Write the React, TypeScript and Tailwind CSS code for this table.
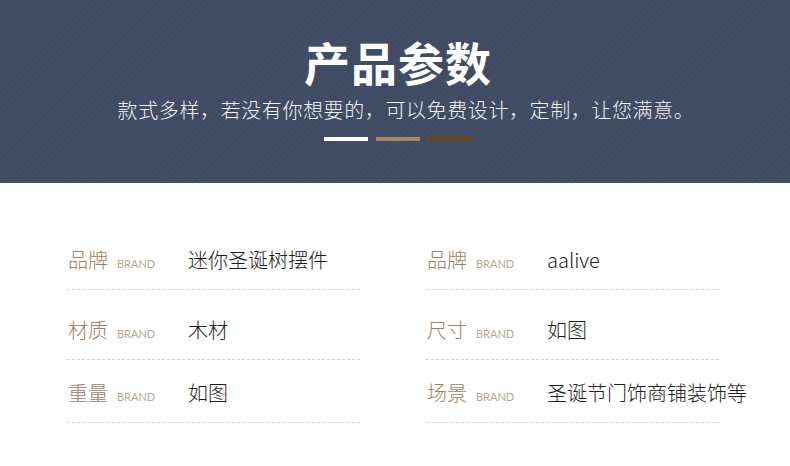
const cjk = "font-['Noto_Sans_CJK_SC','Noto_Sans',sans-serif]";

type Spec = { label: string; value: string };

const left: Spec[] = [
  { label: '品牌', value: '迷你圣诞树摆件' },
  { label: '材质', value: '木材' },
  { label: '重量', value: '如图' },
];

const right: Spec[] = [
  { label: '品牌', value: 'aalive' },
  { label: '尺寸', value: '如图' },
  { label: '场景', value: '圣诞节门饰商铺装饰等' },
];

// per-row top padding so the rows land where the picture has them
const rowPad = ['pt-[63px]', 'pt-[26px]', 'pt-[19px]'];

const Column = ({ items }: { items: Spec[] }) => (
  <div className="flex flex-col w-[293px]">
    {items.map((item, i) => (
      <div key={i} className={`${rowPad[i]} pb-[15px] border-b border-dashed border-[#d2d2d2]`}>
        <div className="flex items-center h-[28px] pl-[1px]">
          <div className="w-[120px] flex items-end shrink-0">
            <span className={`${cjk} font-light text-[20px] leading-[28px] text-[#9a8264]`}>{item.label}</span>
            <span className="ml-[9px] mb-[3px] font-['Lato',sans-serif] text-[11px] leading-[14px] text-[#b3a899]">
              BRAND
            </span>
          </div>
          <span className={`${cjk} font-light text-[20px] leading-[28px] text-[#1e1e1e] whitespace-nowrap`}>{item.value}</span>
        </div>
      </div>
    ))}
  </div>
);

export default function App() {
  return (
    <div className="w-[790px] h-[466px] bg-white overflow-hidden">
      <div className="h-[183px] bg-[#3e4b63] bg-[repeating-linear-gradient(135deg,#3e4b63_0px,#3e4b63_3px,#435068_3px,#435068_4px)] flex flex-col items-center">
        <h1 className={`${cjk} mt-[36px] ml-[6px] text-[46px] leading-[50px] font-bold text-white tracking-[1px]`}>产品参数</h1>
        <p className={`${cjk} font-light mt-[11px] ml-[22px] text-[20px] leading-[26px] text-[#f2f2f2] tracking-[0.6px]`}>
          款式多样，若没有你想要的，可以免费设计，定制，让您满意。
        </p>
        <div className="mt-[14px] ml-[6px] flex gap-[8px]">
          <div className="w-[44px] h-[4px] bg-white" />
          <div className="w-[44px] h-[4px] bg-[#a58866]" />
          <div className="w-[44px] h-[4px] bg-[#6b4512]" />
        </div>
      </div>
      <div className="flex gap-[66px] pl-[67px]">
        <Column items={left} />
        <Column items={right} />
      </div>
    </div>
  );
}
